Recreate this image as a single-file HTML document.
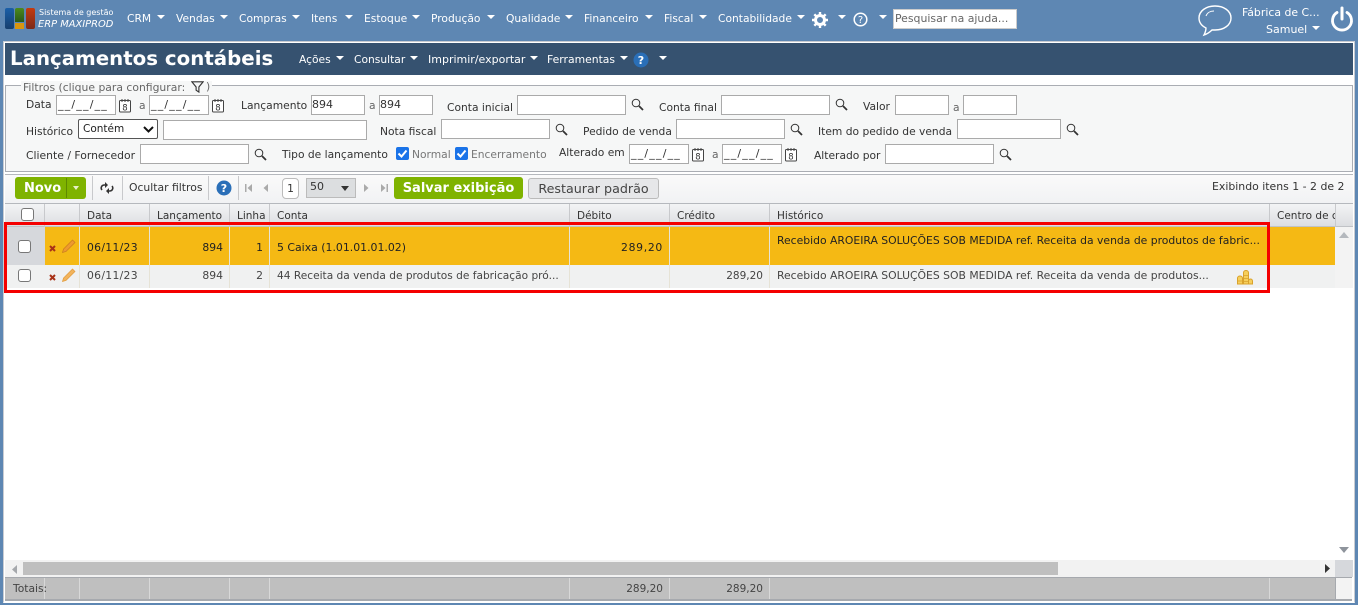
<!DOCTYPE html>
<html lang="pt"><head><meta charset="utf-8"><title>Lançamentos contábeis</title>
<style>
html,body{margin:0;padding:0}
body{width:1358px;height:605px;position:relative;overflow:hidden;background:#5e87b3;font:10.7px "DejaVu Sans","Liberation Sans",sans-serif;color:#333}
div,span,svg,i{position:absolute;box-sizing:border-box}
.t{white-space:nowrap;line-height:14px}
.n{color:#fff;font-size:10.7px}
.m{color:#fff;font-size:10.7px}
.a{width:0;height:0;border-left:4.5px solid transparent;border-right:4.5px solid transparent;border-top:4.5px solid #fff}
.i{background:#fff;border:1px solid #aaa;height:20px;font-size:11px;padding:1px 0;white-space:nowrap;line-height:15px;color:#333}
.d{letter-spacing:1.2px;padding-left:1px}
.v{top:204px;width:1px;height:23px;background:#c8c9cc}
.h{font-size:10.5px}
.c{color:#222;font-size:10.8px}
.r2{color:#444;font-size:10.8px}
.cb{width:13px;height:13px;background:#fff;border:1px solid #777;border-radius:3px}
</style></head><body>
<!-- logo -->
<div style="left:5px;top:8px;width:9px;height:21px;background:linear-gradient(#1a5fa8,#173f6e);border-radius:2px"></div>
<div style="left:15px;top:8px;width:9px;height:14px;background:linear-gradient(#4c8a1c,#2a5a18);border-radius:2px 2px 0 0"></div>
<div style="left:15px;top:23px;width:9px;height:6px;background:#d9950e"></div>
<div style="left:26px;top:8px;width:9px;height:21px;background:linear-gradient(#c43a0e,#7a2a1a);border-radius:2px"></div>
<span class="t n" style="left:39px;top:6px;font-size:8px">Sistema de gestão</span>
<span class="t n" style="left:38px;top:18px;font-size:9.9px;font-style:italic">ERP MAXIPROD</span>
<!-- nav -->
<span class="t n" style="left:127px;top:12px">CRM</span><i class="a" style="left:157px;top:15px"></i>
<span class="t n" style="left:176px;top:12px">Vendas</span><i class="a" style="left:220px;top:15px"></i>
<span class="t n" style="left:239px;top:12px">Compras</span><i class="a" style="left:292px;top:15px"></i>
<span class="t n" style="left:311px;top:12px">Itens</span><i class="a" style="left:345px;top:15px"></i>
<span class="t n" style="left:364px;top:12px">Estoque</span><i class="a" style="left:412px;top:15px"></i>
<span class="t n" style="left:431px;top:12px">Produção</span><i class="a" style="left:487px;top:15px"></i>
<span class="t n" style="left:506px;top:12px">Qualidade</span><i class="a" style="left:565px;top:15px"></i>
<span class="t n" style="left:584px;top:12px">Financeiro</span><i class="a" style="left:645px;top:15px"></i>
<span class="t n" style="left:664px;top:12px">Fiscal</span><i class="a" style="left:699px;top:15px"></i>
<span class="t n" style="left:718px;top:12px">Contabilidade</span><i class="a" style="left:797px;top:15px"></i>
<svg style="left:812px;top:12px" width="16" height="16" viewBox="0 0 16 16"><circle cx="8" cy="8" r="4.5" fill="none" stroke="#fff" stroke-width="3"/><path d="M8 0v3M8 13v3M0 8h3M13 8h3M2.3 2.3l2.2 2.2M11.5 11.500l2.2 2.2M2.3 13.700l2.2-2.2M11.500 4.500l2.2-2.2" stroke="#fff" stroke-width="2.4"/></svg>
<i class="a" style="left:838px;top:15px"></i>
<svg style="left:853px;top:12px" width="15" height="15" viewBox="0 0 15 15"><circle cx="7.5" cy="7.5" r="6.3" fill="none" stroke="#fff" stroke-width="1.5"/><text x="7.5" y="11" text-anchor="middle" font-size="10" fill="#fff" font-family="DejaVu Sans">?</text></svg>
<i class="a" style="left:879px;top:15px"></i>
<div style="left:893px;top:9px;width:124px;height:20px;background:#fff;border:1px solid #ccc;color:#666;font-size:10.9px;line-height:18px;padding-left:1px;white-space:nowrap">Pesquisar na ajuda...</div>
<svg style="left:1197px;top:4px" width="36" height="33" viewBox="0 0 36 33"><path d="M18 2C9 2 2 7 2 14c0 5 3 8 7 10 0 3-1 5-2 7 3-1 6-3 8-5 1 0 2 0 3 0 9 0 16-5 16-12S27 2 18 2z" fill="none" stroke="#fff" stroke-width="1.4"/><path d="M9 12c1-3 4-5 8-5" fill="none" stroke="#fff" stroke-width="1"/></svg>
<span class="t n" style="left:1242px;top:6px;font-size:10.9px">Fábrica de C...</span>
<span class="t n" style="left:1266px;top:23px;font-size:11px">Samuel</span><i class="a" style="left:1312px;top:26px"></i>
<svg style="left:1330px;top:6px" width="24" height="26" viewBox="0 0 24 26"><path d="M7 6.500a9.500 9.500 0 1 0 10 0" fill="none" stroke="#fff" stroke-width="2.8" stroke-linecap="round"/><path d="M12 2v11" stroke="#fff" stroke-width="3" stroke-linecap="round"/></svg>
<!-- panel -->
<div style="left:3px;top:41px;width:1352px;height:562px;background:#fff;border:1px solid #c9ccd2;border-bottom:1px solid #fff"></div>
<div style="left:5px;top:43px;width:1348px;height:32px;background:#365270"></div>
<span class="t" style="left:10px;top:46px;font-size:19.8px;line-height:26px;font-weight:bold;color:#fff">Lançamentos contábeis</span>
<span class="t m" style="left:299px;top:53px">Ações</span><i class="a" style="left:336px;top:56px"></i>
<span class="t m" style="left:354px;top:53px">Consultar</span><i class="a" style="left:410px;top:56px"></i>
<span class="t m" style="left:428px;top:53px;font-size:11px">Imprimir/exportar</span><i class="a" style="left:530px;top:56px"></i>
<span class="t m" style="left:547px;top:53px;font-size:10.8px">Ferramentas</span><i class="a" style="left:620px;top:56px"></i>
<svg style="left:633px;top:52px" width="16" height="16" viewBox="0 0 16 16"><circle cx="8" cy="8" r="7.500" fill="#2a6fb8"/><text x="8" y="12" text-anchor="middle" font-size="11" font-weight="bold" fill="#fff" font-family="DejaVu Sans">?</text></svg>
<i class="a" style="left:659px;top:56px"></i>
<!-- filters -->
<div style="left:5px;top:85px;width:1348px;height:87px;background:#f6f7f7;border:1px solid #aaadb3"></div>
<span class="t" style="left:21px;top:81px;background:#f6f7f7;padding:0 2px;color:#666;font-size:10.8px;width:191px">Filtros (clique para configurar:<span style="left:185px;top:-1px">)</span></span>
<svg style="left:191px;top:80px" width="13" height="13" viewBox="0 0 14 14"><path d="M1 2h12L8.500 7.500V13L5.500 11V7.500z" fill="none" stroke="#333" stroke-width="1.2"/></svg>
<span class="t" style="left:26px;top:98px">Data</span>
<div class="i d" style="left:56px;top:95px;width:60px">__/__/__</div>
<svg style="left:118px;top:98px" width="14" height="15" viewBox="0 0 14 15"><rect x="1.500" y="2.500" width="11" height="11.500" rx="1" fill="#fff" stroke="#444"/><path d="M4 1v3M7 1v3M10 1v3" stroke="#444"/><text x="7" y="12.500" text-anchor="middle" font-size="8.500" fill="#333" font-family="DejaVu Sans">8</text></svg>
<span class="t" style="left:139px;top:99px;color:#666">a</span>
<div class="i d" style="left:149px;top:95px;width:60px">__/__/__</div>
<svg style="left:211px;top:98px" width="14" height="15" viewBox="0 0 14 15"><rect x="1.500" y="2.500" width="11" height="11.500" rx="1" fill="#fff" stroke="#444"/><path d="M4 1v3M7 1v3M10 1v3" stroke="#444"/><text x="7" y="12.500" text-anchor="middle" font-size="8.500" fill="#333" font-family="DejaVu Sans">8</text></svg>
<span class="t" style="left:241px;top:99px">Lançamento</span>
<div class="i" style="left:311px;top:95px;width:54px">894</div>
<span class="t" style="left:369px;top:99px;color:#666">a</span>
<div class="i" style="left:379px;top:95px;width:54px">894</div>
<span class="t" style="left:447px;top:101px">Conta inicial</span>
<div class="i" style="left:517px;top:95px;width:109px"></div>
<svg style="left:631px;top:98px" width="13" height="13" viewBox="0 0 13 13"><circle cx="5" cy="5" r="3.800" fill="none" stroke="#333"/><path d="M8 8l4 4" stroke="#333" stroke-width="1.800"/></svg>
<span class="t" style="left:659px;top:101px">Conta final</span>
<div class="i" style="left:721px;top:95px;width:109px"></div>
<svg style="left:835px;top:98px" width="13" height="13" viewBox="0 0 13 13"><circle cx="5" cy="5" r="3.800" fill="none" stroke="#333"/><path d="M8 8l4 4" stroke="#333" stroke-width="1.800"/></svg>
<span class="t" style="left:863px;top:100px">Valor</span>
<div class="i" style="left:895px;top:95px;width:54px"></div>
<span class="t" style="left:953px;top:101px;color:#666">a</span>
<div class="i" style="left:963px;top:95px;width:54px"></div>

<span class="t" style="left:26px;top:125px">Histórico</span>
<div class="i" style="left:78px;top:119px;width:80px;border-color:#555;border-radius:2px;padding:2px 0 0 4px;color:#222;font-size:10.5px">Contém</div>
<svg style="left:143px;top:126px" width="11" height="7" viewBox="0 0 11 7"><path d="M1 1l4.500 4.500L10 1" fill="none" stroke="#111" stroke-width="2"/></svg>
<div class="i" style="left:163px;top:120px;width:204px"></div>
<span class="t" style="left:380px;top:125px">Nota fiscal</span>
<div class="i" style="left:441px;top:119px;width:109px"></div>
<svg style="left:555px;top:123px" width="13" height="13" viewBox="0 0 13 13"><circle cx="5" cy="5" r="3.800" fill="none" stroke="#333"/><path d="M8 8l4 4" stroke="#333" stroke-width="1.800"/></svg>
<span class="t" style="left:583px;top:125px">Pedido de venda</span>
<div class="i" style="left:676px;top:119px;width:109px"></div>
<svg style="left:790px;top:123px" width="13" height="13" viewBox="0 0 13 13"><circle cx="5" cy="5" r="3.800" fill="none" stroke="#333"/><path d="M8 8l4 4" stroke="#333" stroke-width="1.800"/></svg>
<span class="t" style="left:818px;top:125px">Item do pedido de venda</span>
<div class="i" style="left:957px;top:119px;width:104px"></div>
<svg style="left:1066px;top:123px" width="13" height="13" viewBox="0 0 13 13"><circle cx="5" cy="5" r="3.800" fill="none" stroke="#333"/><path d="M8 8l4 4" stroke="#333" stroke-width="1.800"/></svg>

<span class="t" style="left:26px;top:149px;font-size:10.8px">Cliente / Fornecedor</span>
<div class="i" style="left:140px;top:144px;width:109px"></div>
<svg style="left:254px;top:148px" width="13" height="13" viewBox="0 0 13 13"><circle cx="5" cy="5" r="3.800" fill="none" stroke="#333"/><path d="M8 8l4 4" stroke="#333" stroke-width="1.800"/></svg>
<span class="t" style="left:282px;top:148px">Tipo de lançamento</span>
<svg style="left:396px;top:147px" width="13" height="13" viewBox="0 0 13 13"><rect width="13" height="13" rx="2" fill="#1a73e8"/><path d="M2.500 6.500l3 3 5-6" fill="none" stroke="#fff" stroke-width="2"/></svg>
<span class="t" style="left:412px;top:148px;color:#777">Normal</span>
<svg style="left:455px;top:147px" width="13" height="13" viewBox="0 0 13 13"><rect width="13" height="13" rx="2" fill="#1a73e8"/><path d="M2.500 6.500l3 3 5-6" fill="none" stroke="#fff" stroke-width="2"/></svg>
<span class="t" style="left:471px;top:148px;color:#777">Encerramento</span>
<span class="t" style="left:559px;top:146px">Alterado em</span>
<div class="i d" style="left:629px;top:144px;width:60px">__/__/__</div>
<svg style="left:691px;top:147px" width="14" height="15" viewBox="0 0 14 15"><rect x="1.500" y="2.500" width="11" height="11.500" rx="1" fill="#fff" stroke="#444"/><path d="M4 1v3M7 1v3M10 1v3" stroke="#444"/><text x="7" y="12.500" text-anchor="middle" font-size="8.500" fill="#333" font-family="DejaVu Sans">8</text></svg>
<span class="t" style="left:712px;top:148px;color:#666">a</span>
<div class="i d" style="left:722px;top:144px;width:60px">__/__/__</div>
<svg style="left:784px;top:147px" width="14" height="15" viewBox="0 0 14 15"><rect x="1.500" y="2.500" width="11" height="11.500" rx="1" fill="#fff" stroke="#444"/><path d="M4 1v3M7 1v3M10 1v3" stroke="#444"/><text x="7" y="12.500" text-anchor="middle" font-size="8.500" fill="#333" font-family="DejaVu Sans">8</text></svg>
<span class="t" style="left:814px;top:149px">Alterado por</span>
<div class="i" style="left:885px;top:144px;width:109px"></div>
<svg style="left:999px;top:148px" width="13" height="13" viewBox="0 0 13 13"><circle cx="5" cy="5" r="3.800" fill="none" stroke="#333"/><path d="M8 8l4 4" stroke="#333" stroke-width="1.800"/></svg>
<!-- toolbar -->
<div style="left:5px;top:174px;width:1348px;height:30px;background:linear-gradient(#fafafa,#f1f2f4);border-top:1px solid #b5b8bd;border-bottom:1px solid #b5b8bd"></div>
<div style="left:15px;top:177px;width:71px;height:22px;background:#7fb300;border-radius:3px"></div>
<div style="left:66px;top:178px;width:1px;height:20px;background:#5f8a00"></div>
<span class="t" style="left:24px;top:182px;color:#fff;font-weight:bold;font-size:13px">Novo</span>
<i class="a" style="left:73px;top:186px;border-left-width:3px;border-right-width:3px;border-top-width:4px;border-top-color:#e8f0c8"></i>
<div style="left:92px;top:176px;width:1px;height:24px;background:#c8c9cc"></div>
<svg style="left:100px;top:182px" width="14" height="12" viewBox="0 0 14 12"><path d="M6 3H4a3 3 0 0 0-2 5M8 9h2a3 3 0 0 0 2-5" fill="none" stroke="#333" stroke-width="1.600"/><path d="M5 0v6l3-3zM9 12V6L6 9z" fill="#333"/></svg>
<div style="left:122px;top:176px;width:1px;height:24px;background:#c8c9cc"></div>
<span class="t" style="left:129px;top:181px;color:#333;font-size:10.8px">Ocultar filtros</span>
<div style="left:208px;top:176px;width:1px;height:24px;background:#c8c9cc"></div>
<svg style="left:216px;top:180px" width="16" height="16" viewBox="0 0 16 16"><circle cx="8" cy="8" r="7.500" fill="#2a6fb8"/><text x="8" y="12" text-anchor="middle" font-size="11" font-weight="bold" fill="#fff" font-family="DejaVu Sans">?</text></svg>
<div style="left:238px;top:176px;width:1px;height:24px;background:#c8c9cc"></div>
<svg style="left:244px;top:183px" width="10" height="10" viewBox="0 0 10 10"><path d="M1 1h1.500v8H1zM8 1v8L3.500 5z" fill="#aaa"/></svg>
<svg style="left:262px;top:183px" width="8" height="10" viewBox="0 0 8 10"><path d="M6 1v8L1.500 5z" fill="#aaa"/></svg>
<div style="left:282px;top:178px;width:17px;height:21px;background:#fff;border:1px solid #bbb;border-radius:4px;text-align:center;line-height:20px;color:#333">1</div>
<div style="left:306px;top:178px;width:50px;height:20px;background:#dcdee0;border:1px solid #bbb;padding-left:3px;line-height:16px;color:#333;font-size:11px">50</div>
<div class="a" style="left:341px;top:186px;border-top-color:#333;border-top-width:5px"></div>
<svg style="left:362px;top:183px" width="8" height="10" viewBox="0 0 8 10"><path d="M2 1v8L6.500 5z" fill="#aaa"/></svg>
<svg style="left:379px;top:183px" width="10" height="10" viewBox="0 0 10 10"><path d="M2 1v8L6.500 5zM7.500 1H9v8H7.500z" fill="#aaa"/></svg>
<div style="left:394px;top:177px;width:129px;height:22px;background:#7fb300;border-radius:3px;color:#fff;font-weight:bold;font-size:13px;line-height:24px;text-align:center;white-space:nowrap">Salvar exibição</div>
<div style="left:528px;top:178px;width:131px;height:21px;background:#e6e7e9;border:1px solid #bbb;border-radius:3px;color:#444;font-size:12.7px;line-height:19px;text-align:center;white-space:nowrap">Restaurar padrão</div>
<span class="t" style="left:1212px;top:180px;color:#333;font-size:10.9px">Exibindo itens 1 - 2 de 2</span>
<!-- table header -->
<div style="left:5px;top:204px;width:1348px;height:23px;background:linear-gradient(#f3f4f5,#dcdee1);border-bottom:1px solid #c0c2c6"></div>
<div class="v" style="left:44px"></div><div class="v" style="left:79px"></div><div class="v" style="left:149px"></div><div class="v" style="left:229px"></div><div class="v" style="left:269px"></div><div class="v" style="left:569px"></div><div class="v" style="left:669px"></div><div class="v" style="left:769px"></div><div class="v" style="left:1269px"></div><div class="v" style="left:1335px"></div>
<div class="cb" style="left:21px;top:208px"></div>
<span class="t h" style="left:87px;top:209px">Data</span>
<span class="t h" style="left:157px;top:209px">Lançamento</span>
<span class="t h" style="left:237px;top:209px">Linha</span>
<span class="t h" style="left:277px;top:209px">Conta</span>
<span class="t h" style="left:577px;top:209px">Débito</span>
<span class="t h" style="left:677px;top:209px">Crédito</span>
<span class="t h" style="left:777px;top:209px">Histórico</span>
<div class="t h" style="left:1277px;top:209px;width:58px;overflow:hidden">Centro de custo</div>
<!-- rows -->
<div style="left:5px;top:227px;width:40px;height:38px;background:#d6d8dc"></div>
<div style="left:45px;top:227px;width:1290px;height:38px;background:#f5b914"></div>
<div style="left:5px;top:265px;width:1330px;height:23px;background:#f0f1f1"></div>
<div style="left:1335px;top:227px;width:18px;height:333px;background:#fff"></div>
<div style="left:1335px;top:227px;width:18px;height:61px;background:#f3f3f3"></div>
<div style="left:79px;top:227px;width:1px;height:61px;background:#e6e3d6"></div><div style="left:149px;top:227px;width:1px;height:61px;background:#e6e3d6"></div><div style="left:229px;top:227px;width:1px;height:61px;background:#e6e3d6"></div><div style="left:269px;top:227px;width:1px;height:61px;background:#e6e3d6"></div><div style="left:569px;top:227px;width:1px;height:61px;background:#e6e3d6"></div><div style="left:669px;top:227px;width:1px;height:61px;background:#e6e3d6"></div><div style="left:769px;top:227px;width:1px;height:61px;background:#e6e3d6"></div>
<div class="cb" style="left:18px;top:240px"></div>
<div class="cb" style="left:18px;top:269px"></div>
<svg style="left:49px;top:245px" width="7" height="7" viewBox="0 0 7 7"><path d="M1 1l5 5M6 1L1 6" stroke="#a83218" stroke-width="2"/></svg>
<svg style="left:49px;top:274px" width="7" height="7" viewBox="0 0 7 7"><path d="M1 1l5 5M6 1L1 6" stroke="#a83218" stroke-width="2"/></svg>
<svg style="left:61px;top:239px" width="15" height="15" viewBox="0 0 15 15"><path d="M1.500 13.500l1-3.500L11.500 1l2.500 2.500L5 12.500z" fill="#ee9a2e" stroke="#c97a1e" stroke-width=".7"/></svg>
<svg style="left:61px;top:268px" width="15" height="15" viewBox="0 0 15 15"><path d="M1.500 13.500l1-3.500L11.500 1l2.500 2.500L5 12.500z" fill="#f2b45c" stroke="#e09a3c" stroke-width=".7"/></svg>
<span class="t c" style="left:87px;top:241px;letter-spacing:.3px">06/11/23</span>
<span class="t c" style="right:1135px;top:241px">894</span>
<span class="t c" style="right:1095px;top:241px">1</span>
<span class="t c" style="left:277px;top:241px;font-size:10.9px">5 Caixa (1.01.01.01.02)</span>
<span class="t c" style="right:695px;top:241px;letter-spacing:.7px">289,20</span>
<span class="t c" style="left:777px;top:234px">Recebido AROEIRA SOLUÇÕES SOB MEDIDA ref. Receita da venda de produtos de fabric...</span>
<span class="t r2" style="left:87px;top:269px;letter-spacing:.3px">06/11/23</span>
<span class="t r2" style="right:1135px;top:269px">894</span>
<span class="t r2" style="right:1095px;top:269px">2</span>
<span class="t r2" style="left:277px;top:269px;font-size:10.6px">44 Receita da venda de produtos de fabricação pró...</span>
<span class="t r2" style="right:595px;top:269px;font-size:10.5px">289,20</span>
<span class="t r2" style="left:777px;top:269px">Recebido AROEIRA SOLUÇÕES SOB MEDIDA ref. Receita da venda de produtos...</span>
<svg style="left:1236px;top:268px" width="18" height="18" viewBox="0 0 18 18"><path d="M7.500 4.500a2.500 2 0 0 1 5 0V16h-5z" fill="#f6cf5c" stroke="#d9a22c"/><path d="M1.500 10a2.500 2 0 0 1 5 0v6h-5z" fill="#f6cf5c" stroke="#d9a22c"/><path d="M12.500 13a2 2 0 0 1 4 0v3h-4z" fill="#f6cf5c" stroke="#d9a22c"/><path d="M8 7.500h4M8 10.500h4M8 13.500h4M2 13h4" stroke="#d9a22c" stroke-width=".7"/></svg>
<!-- red box -->
<div style="left:4px;top:222px;width:1266px;height:71px;border:3px solid #f40000"></div>
<!-- scrollbars -->
<svg style="left:1339px;top:232px" width="10" height="6" viewBox="0 0 10 6"><path d="M0 6h10L5 0z" fill="#b4b8bd"/></svg>
<svg style="left:1339px;top:547px" width="10" height="6" viewBox="0 0 10 6"><path d="M0 0h10L5 6z" fill="#8e949c"/></svg>
<div style="left:5px;top:560px;width:1330px;height:17px;background:#f2f2f2"></div>
<div style="left:1335px;top:560px;width:18px;height:17px;background:#d6d8dc"></div>
<div style="left:23px;top:562px;width:1035px;height:13px;background:#bfbfbf"></div>
<svg style="left:12px;top:565px" width="6" height="9" viewBox="0 0 6 9"><path d="M5 0v9L0 4.500z" fill="#a5a8ac"/></svg>
<svg style="left:1325px;top:564px" width="6" height="9" viewBox="0 0 6 9"><path d="M0 0v9l5-4.500z" fill="#333"/></svg>
<!-- totals -->
<div style="left:5px;top:577px;width:1330px;height:24px;background:#bfbfbf;border-top:1px solid #a6a9ae;border-bottom:2px solid #a6a9ae"></div>
<div style="left:1335px;top:577px;width:17px;height:24px;background:#f3f3f3;border-left:1px solid #a6a9ae;border-top:1px solid #a6a9ae;border-bottom:2px solid #a6a9ae"></div>
<div style="left:44px;top:578px;width:1px;height:21px;background:#d8d8d8"></div><div style="left:79px;top:578px;width:1px;height:21px;background:#d8d8d8"></div><div style="left:149px;top:578px;width:1px;height:21px;background:#d8d8d8"></div><div style="left:229px;top:578px;width:1px;height:21px;background:#d8d8d8"></div><div style="left:269px;top:578px;width:1px;height:21px;background:#d8d8d8"></div><div style="left:569px;top:578px;width:1px;height:21px;background:#d8d8d8"></div><div style="left:669px;top:578px;width:1px;height:21px;background:#d8d8d8"></div><div style="left:769px;top:578px;width:1px;height:21px;background:#d8d8d8"></div><div style="left:1269px;top:578px;width:1px;height:21px;background:#d8d8d8"></div>
<span class="t" style="left:13px;top:582px;color:#444">Totais:</span>
<span class="t" style="right:695px;top:582px;color:#444;font-size:10.5px">289,20</span>
<span class="t" style="right:595px;top:582px;color:#444;font-size:10.5px">289,20</span>
</body></html>
